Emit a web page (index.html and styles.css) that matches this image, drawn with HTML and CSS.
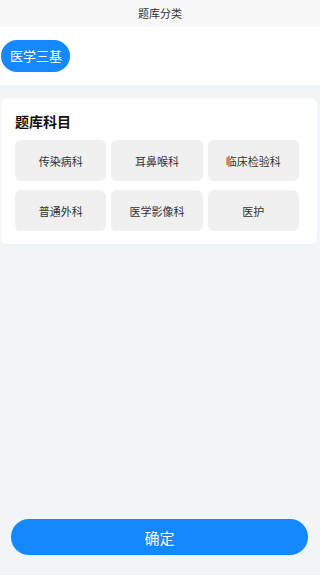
FILE: index.html
```html
<!DOCTYPE html>
<html lang="zh">
<head>
<meta charset="utf-8">
<title>题库分类</title>
<link rel="stylesheet" href="styles.css">
</head>
<body>
<div class="page">
  <header class="nav">题库分类</header>
  <section class="tabs">
    <span class="chip">医学三基</span>
  </section>
  <section class="card">
    <h2 class="card-title">题库科目</h2>
    <div class="grid">
      <div class="item">传染病科</div>
      <div class="item">耳鼻喉科</div>
      <div class="item">临床检验科</div>
      <div class="item">普通外科</div>
      <div class="item">医学影像科</div>
      <div class="item">医护</div>
    </div>
  </section>
  <footer class="footer">
    <button class="confirm">确定</button>
  </footer>
</div>
</body>
</html>
```

FILE: styles.css
```css
* { box-sizing: border-box; }
html, body {
  margin: 0;
  padding: 0;
  background: #f2f5f8;
  font-family: "Noto Sans CJK SC", "Noto Sans", sans-serif;
}
.page {
  height: 575px;
  display: flex;
  flex-direction: column;
}
.nav {
  height: 27px;
  line-height: 27px;
  background: #f7f7f7;
  text-align: center;
  font-size: 11px;
  color: #333;
}
.tabs {
  height: 58px;
  background: #fff;
  padding: 13px 1px;
  display: flex;
  align-items: flex-start;
}
.chip {
  height: 32px;
  line-height: 32px;
  padding: 0 8px 0 9px;
  border-radius: 16px;
  background: #1688fe;
  color: #fff;
  font-size: 13px;
}
.card {
  margin: 13px 3px 0 1px;
  background: #fff;
  border-radius: 6px;
  padding: 13px 18px 13px 14px;
}
.card-title {
  margin: 0;
  font-size: 14px;
  font-weight: bold;
  line-height: 20px;
  color: #111;
}
.grid {
  margin-top: 9px;
  display: grid;
  grid-template-columns: repeat(3, 1fr);
  column-gap: 5px;
  row-gap: 9px;
}
.item {
  height: 41px;
  border-radius: 6px;
  background: #f0f0f0;
  display: flex;
  align-items: center;
  justify-content: center;
  font-size: 11px;
  color: #333;
}
.footer {
  margin-top: auto;
  padding: 0 12px 20px 11px;
}
.confirm {
  display: block;
  width: 100%;
  height: 36px;
  border: none;
  border-radius: 18px;
  background: #1488fe;
  color: #fff;
  font-family: inherit;
  font-size: 15px;
  padding: 0;
}
```
